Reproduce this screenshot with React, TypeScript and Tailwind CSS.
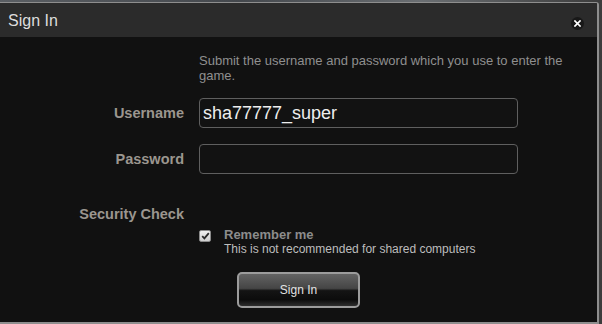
import React from "react";

export default function App() {
  return (
    <div className="w-[602px] h-[324px] bg-[linear-gradient(to_right,#5a5e63,#44484d_40%,#6a6e72_70%,#3c3c3c)] pt-[2px] pr-[3px] font-['Liberation_Sans',Arial,sans-serif]">
      <div className="w-[599px] h-[322px] border-t border-r-2 border-b-2 border-[#8e8e8e] rounded-tr-[3px] bg-[#111111] flex flex-col overflow-hidden">
        {/* Header */}
        <div className="h-[34px] bg-[#2b2b2b] flex justify-between items-start pl-[8px] pr-[13px]">
          <div className="pt-[8px] text-[16px] leading-[20px] text-[#dddddd]">Sign In</div>
          <button className="mt-[14px] w-[13px] h-[13px] rounded-full bg-[#181818] flex items-center justify-center">
            <svg width="7" height="7" viewBox="0 0 7 7">
              <path d="M1 1 L6 6 M6 1 L1 6" stroke="#ffffff" strokeWidth="1.7" strokeLinecap="square" />
            </svg>
          </button>
        </div>

        {/* Body */}
        <div className="flex flex-col pt-[16px]">
          <div className="flex gap-[15px]">
            <div className="w-[184px] shrink-0" />
            <p className="max-w-[392px] text-[13px] leading-[15px] text-[#8f8f8f]">
              Submit the username and password which you use to enter the game.
            </p>
          </div>

          <div className="flex gap-[15px] items-center mt-[15px]">
            <div className="w-[184px] shrink-0 text-right font-bold text-[14.5px] leading-[18px] text-[#9b968f]">
              Username
            </div>
            <div className="w-[319px] h-[30px] border border-[#5f5f5f] rounded-[4px] bg-[#121212] flex items-center pl-[3px] text-[18px] text-[#eeeeee]">
              sha77777_super
            </div>
          </div>

          <div className="flex gap-[15px] items-center mt-[16px]">
            <div className="w-[184px] shrink-0 text-right font-bold text-[14.5px] leading-[18px] text-[#9b968f]">
              Password
            </div>
            <div className="w-[319px] h-[30px] border border-[#5f5f5f] rounded-[4px] bg-[#121212]" />
          </div>

          <div className="flex gap-[15px] mt-[31px]">
            <div className="w-[184px] shrink-0 text-right font-bold text-[14.5px] leading-[18px] text-[#9b968f]">
              Security Check
            </div>
          </div>

          <div className="flex gap-[15px] mt-[5px]">
            <div className="w-[184px] shrink-0" />
            <div className="flex gap-[13px]">
              <div className="mt-[2px] w-[12px] h-[12px] border border-[#8a8a8a] rounded-[2px] bg-[linear-gradient(to_bottom,#f0f0f0,#cfcfcf)] flex items-center justify-center">
                <svg width="9" height="8" viewBox="0 0 9 8">
                  <path d="M1.2 4.2 L3.4 6.4 L7.8 1.2" stroke="#2a2a2a" strokeWidth="1.8" fill="none" />
                </svg>
              </div>
              <div className="flex flex-col">
                <div className="font-bold text-[13px] leading-[14px] text-[#8c8c8c]">Remember me</div>
                <div className="text-[12px] leading-[15px] text-[#bdbdbd]">
                  This is not recommended for shared computers
                </div>
              </div>
            </div>
          </div>

          <div className="flex justify-center mt-[15px]">
            <button className="w-[123px] h-[36px] rounded-[5px] border-2 border-[#9c9c9c] bg-[linear-gradient(to_bottom,#636363_0%,#454545_45%,#141414_52%,#0c0c0c_80%,#2e2e2e_100%)] text-[12px] text-[#e2e2e2] flex items-center justify-center">
              Sign In
            </button>
          </div>
        </div>
      </div>
    </div>
  );
}
